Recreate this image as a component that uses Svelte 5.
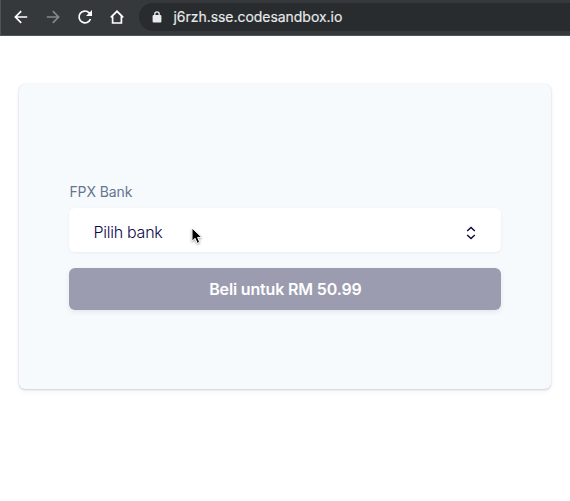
<script>
  const url = 'j6rzh.sse.codesandbox.io';
</script>

<div class="page">
  <header class="toolbar">
    <nav class="nav">
      <svg class="icon" viewBox="0 0 16 16" aria-label="Back"><path d="M14.2 8H2.5M8.2 2.2 2.4 8l5.8 5.8" /></svg>
      <svg class="icon muted" viewBox="0 0 16 16" aria-label="Forward"><path d="M1.8 8h11.7M7.8 2.2 13.6 8l-5.8 5.8" /></svg>
      <svg class="icon" viewBox="0 0 16 16" aria-label="Reload"><path d="M13.5 10A5.9 5.9 0 1 1 12.2 3.8L13.5 5.1" /><path class="solid" d="M15 1v6H9z" /></svg>
      <svg class="icon" viewBox="0 0 16 16" aria-label="Home"><path d="M1.8 8.3 8 2.3l6.2 6M3.6 7v7h8.8V7" /></svg>
    </nav>
    <div class="address">
      <svg class="lock" viewBox="0 0 10 12"><rect class="solid" x=".6" y="4" width="8.8" height="7.5" rx="1" /><path d="M2.8 4.5V3a2.2 2.2 0 0 1 4.4 0v1.5" /></svg>
      <span>{url}</span>
    </div>
  </header>

  <main class="card">
    <div class="label">FPX Bank</div>
    <div class="select">
      <span>Pilih bank</span>
      <svg class="chevrons" viewBox="0 0 10 14"><path d="M1.2 5 5 1.4 8.8 5M1.2 9 5 12.6 8.8 9" /></svg>
    </div>
    <button class="buy">Beli untuk RM 50.99</button>
  </main>

  <svg class="cursor" viewBox="0 0 12 18"><path d="M1 1v13.2l3.1-2.9 2.1 5 2.5-1.1-2.1-4.8h4.2z" /></svg>
</div>

<style>
  :global(body) { background: #fff; }
  .page {
    position: relative;
    height: 501px;
    overflow: hidden;
    font-family: Inter, "Liberation Sans", sans-serif;
  }
  .toolbar {
    box-sizing: border-box;
    height: 36px;
    display: flex;
    align-items: center;
    padding: 0 0 2px 13px;
    background: #35393c;
    border-bottom: 1px solid #515457;
    border-left: 1px solid #515457;
  }
  .nav { display: flex; gap: 16px; }
  .icon { display: block; width: 16px; height: 16px; margin-left: -1px; margin-right: 1px; }
  path { fill: none; stroke: #fff; stroke-width: 1.7; }
  .solid { fill: #fff; stroke: none; }
  .muted path { stroke: #85888a; }
  .address {
    flex: 1;
    height: 28px;
    margin-left: 13px;
    padding-left: 13px;
    display: flex;
    align-items: center;
    gap: 11.5px;
    border-radius: 14px 0 0 14px;
    background: #282c2f;
    color: #e9eaeb;
    font-size: 14px;
    line-height: 20px;
    letter-spacing: -.04px;
    -webkit-text-stroke: .15px #e9eaeb;
  }
  .lock { width: 10px; height: 12px; margin-top: 1px; }
  .lock path { stroke: #e9eaeb; stroke-width: 1.3; }
  .lock .solid { fill: #e9eaeb; stroke: none; }
  .card {
    box-sizing: border-box;
    width: 532px;
    height: 305px;
    margin: 48px 0 0 19.4px;
    padding: 98px 50px 0;
    border-radius: 6px;
    background: #f6fafd;
    box-shadow: 0 0 1px rgba(50, 50, 93, .18), 0 1px 2px rgba(50, 50, 93, .18), 0 3px 6px rgba(0, 0, 0, .04);
  }
  .label {
    height: 26px;
    line-height: 20px;
    font-size: 14px;
    letter-spacing: -.1px;
    color: #66758f;
  }
  .select {
    box-sizing: border-box;
    height: 44px;
    padding: 4px 25px 0 24px;
    display: flex;
    align-items: center;
    justify-content: space-between;
    border-radius: 6px;
    background: #fff;
    box-shadow: 0 1px 3px rgba(50, 50, 93, .07);
    font-size: 16px;
    font-weight: 300;
    letter-spacing: -.25px;
    color: #0a0850;
  }
  .chevrons { width: 10px; height: 14px; margin-top: 1px; }
  .chevrons path { stroke: #0a0840; stroke-width: 1.4; }
  .buy {
    display: block;
    width: 100%;
    height: 42px;
    margin-top: 16px;
    padding: 0;
    border: 0;
    border-radius: 6px;
    background: #9b9cb0;
    box-shadow: 0 2px 5px rgba(50, 50, 93, .09);
    color: #fff;
    font: 600 16px/43px Inter, "Liberation Sans", sans-serif;
    letter-spacing: -.16px;
  }
  .cursor {
    position: absolute;
    left: 191px;
    top: 227px;
    width: 12px;
    height: 18px;
    overflow: visible;
    filter: drop-shadow(0 1px 1px rgba(0, 0, 0, .35));
  }
  .cursor path { fill: #000; stroke: #fff; stroke-width: 1; }
</style>
